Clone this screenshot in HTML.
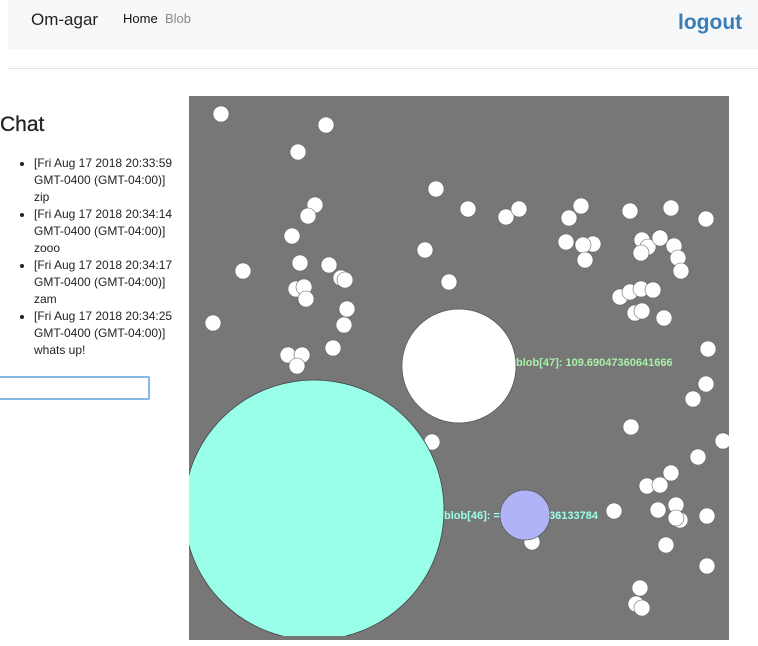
<!DOCTYPE html>
<html><head><meta charset="utf-8"><style>
body{margin:0;width:758px;height:646px;overflow:hidden;background:#fff;font-family:"Liberation Sans",sans-serif;position:relative;color:#222}
.nav{position:absolute;left:8px;top:0;width:750px;height:49px;background:#f7f8fa}
.brand{position:absolute;left:31px;top:10px;font-size:17px;color:#222}
.l1{position:absolute;left:123px;top:11px;font-size:13px;color:#111}
.l2{position:absolute;left:165px;top:11px;font-size:13px;color:#888}
.lo{position:absolute;left:678px;top:11px;font-size:21px;color:#3a7cb8;font-weight:bold}
.hr{position:absolute;left:8px;top:68px;width:750px;height:1px;background:#e3e3e3}
h2{position:absolute;left:0;top:113px;margin:0;font-size:21px;font-weight:normal;color:#222;-webkit-text-stroke:0.3px #222}
ul{position:absolute;left:0;top:155px;margin:0;padding-left:34px;font-size:12px;line-height:17px;width:148px}
.inp{position:absolute;left:-4px;top:376px;width:150px;height:20px;border:2px solid #86b8e6;border-radius:2px}
svg{position:absolute;left:189px;top:96px}
svg text{font-family:"Liberation Sans",sans-serif;font-size:11px;font-weight:bold}
</style></head><body>
<div class="nav"></div>
<div class="brand">Om-agar</div><div class="l1">Home</div><div class="l2">Blob</div><div class="lo">logout</div>
<div class="hr"></div>
<h2>Chat</h2>
<ul>
<li>[Fri Aug 17 2018 20:33:59 GMT-0400 (GMT-04:00)] zip</li>
<li>[Fri Aug 17 2018 20:34:14 GMT-0400 (GMT-04:00)] zooo</li>
<li>[Fri Aug 17 2018 20:34:17 GMT-0400 (GMT-04:00)] zam</li>
<li>[Fri Aug 17 2018 20:34:25 GMT-0400 (GMT-04:00)] whats up!</li>
</ul>
<div class="inp"></div>
<svg width="540" height="544" viewBox="189 96 540 544">
<rect x="189" y="96" width="540" height="544" fill="#777"/>
<g fill="#fff" stroke="#666" stroke-width="0.6">
<circle cx="221" cy="114" r="8"/><circle cx="326" cy="125" r="8"/><circle cx="298" cy="152" r="8"/><circle cx="436" cy="189" r="8"/><circle cx="468" cy="209" r="8"/><circle cx="506" cy="217" r="8"/><circle cx="519" cy="209" r="8"/><circle cx="569" cy="218" r="8"/><circle cx="581" cy="206" r="8"/><circle cx="630" cy="211" r="8"/><circle cx="671" cy="208" r="8"/><circle cx="706" cy="219" r="8"/><circle cx="315" cy="205" r="8"/><circle cx="308" cy="216" r="8"/><circle cx="292" cy="236" r="8"/><circle cx="425" cy="250" r="8"/><circle cx="566" cy="242" r="8"/><circle cx="593" cy="244" r="8"/><circle cx="583" cy="245" r="8"/><circle cx="585" cy="260" r="8"/><circle cx="642" cy="240" r="8"/><circle cx="648" cy="247" r="8"/><circle cx="660" cy="238" r="8"/><circle cx="674" cy="246" r="8"/><circle cx="641" cy="253" r="8"/><circle cx="678" cy="258" r="8"/><circle cx="681" cy="271" r="8"/><circle cx="243" cy="271" r="8"/><circle cx="300" cy="263" r="8"/><circle cx="329" cy="265" r="8"/><circle cx="341" cy="278" r="8"/><circle cx="345" cy="280" r="8"/><circle cx="449" cy="282" r="8"/><circle cx="296" cy="289" r="8"/><circle cx="304" cy="287" r="8"/><circle cx="306" cy="299" r="8"/><circle cx="620" cy="297" r="8"/><circle cx="630" cy="292" r="8"/><circle cx="641" cy="289" r="8"/><circle cx="653" cy="290" r="8"/><circle cx="635" cy="313" r="8"/><circle cx="642" cy="311" r="8"/><circle cx="664" cy="318" r="8"/><circle cx="347" cy="309" r="8"/><circle cx="344" cy="325" r="8"/><circle cx="213" cy="323" r="8"/><circle cx="333" cy="348" r="8"/><circle cx="288" cy="355" r="8"/><circle cx="302" cy="355" r="8"/><circle cx="297" cy="366" r="8"/><circle cx="708" cy="349" r="8"/><circle cx="706" cy="384" r="8"/><circle cx="693" cy="399" r="8"/><circle cx="631" cy="427" r="8"/><circle cx="432" cy="442" r="8"/><circle cx="723" cy="441" r="8"/><circle cx="698" cy="457" r="8"/><circle cx="671" cy="473" r="8"/><circle cx="647" cy="486" r="8"/><circle cx="660" cy="485" r="8"/><circle cx="676" cy="505" r="8"/><circle cx="658" cy="510" r="8"/><circle cx="680" cy="520" r="8"/><circle cx="676" cy="518" r="8"/><circle cx="707" cy="516" r="8"/><circle cx="614" cy="511" r="8"/><circle cx="532" cy="542" r="8"/><circle cx="666" cy="545" r="8"/><circle cx="707" cy="566" r="8"/><circle cx="640" cy="588" r="8"/><circle cx="636" cy="604" r="8"/><circle cx="642" cy="608" r="8"/>
</g>
<circle cx="459" cy="366" r="57" fill="#fff" stroke="#555" stroke-width="0.7"/>
<text x="516" y="366" fill="#a8f0a8">blob[47]: 109.69047360641666</text>
<clipPath id="c"><rect x="189" y="96" width="540" height="540"/></clipPath>
<circle cx="314" cy="510" r="130" fill="#99ffe8" stroke="#444" stroke-width="0.8" clip-path="url(#c)"/>
<text x="444" y="519" fill="#99ffe8">blob[46]: =</text>
<text x="549" y="519" fill="#99ffe8">36133784</text>
<circle cx="525" cy="515" r="25" fill="#b0b4f6" stroke="#555" stroke-width="0.7"/>
</svg>
</body></html>
